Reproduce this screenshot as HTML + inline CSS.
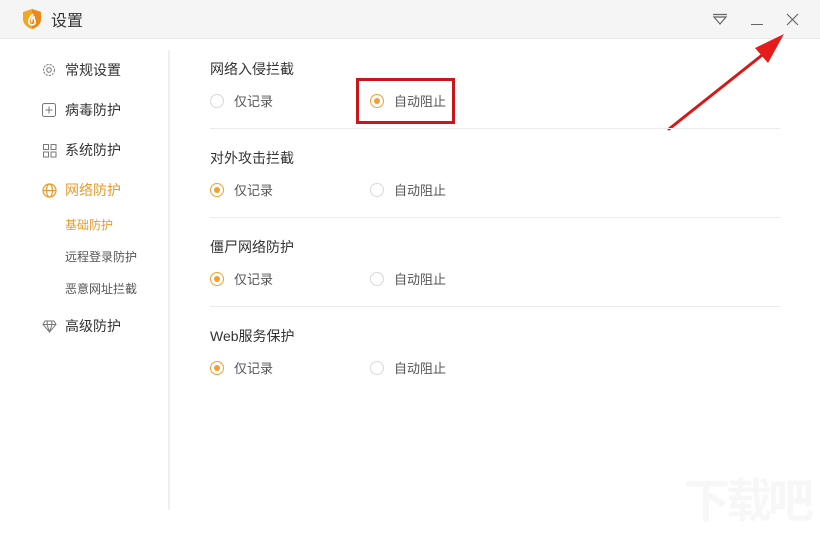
<!DOCTYPE html>
<html><head><meta charset="utf-8"><style>
*{margin:0;padding:0;box-sizing:border-box}
body{width:820px;height:540px;background:#fff;font-family:"Liberation Sans","Noto Sans CJK SC",sans-serif;position:relative;overflow:hidden;color:#333}
.title{position:absolute;left:0;top:0;width:820px;height:39px;background:#f5f5f5;border-bottom:1px solid #e8e8e8}
.t{position:absolute;left:51px;top:7px;font-size:16px;color:#333}
.nav{position:absolute;font-size:14px;color:#333}
.sub{position:absolute;left:65px;font-size:12px;color:#555}
.div{position:absolute;left:168px;top:50px;width:2px;height:460px;background:#efefef}
.h{position:absolute;left:210px;font-size:14px;color:#333}
.r{position:absolute;width:14px;height:14px;border:1px solid #d8d8d8;border-radius:50%}
.r.on{border-color:#f0a030}
.r.on::after{content:"";position:absolute;left:3px;top:3px;width:6px;height:6px;border-radius:50%;background:#f0a030}
.l{position:absolute;font-size:13px;color:#555}
.line{position:absolute;left:210px;width:570px;height:1px;background:#ebebeb}
</style></head><body>
<div class="title">
<svg style="position:absolute;left:22px;top:8px" width="20" height="22" viewBox="0 0 20 22"><path d="M10 1 L19 4 L19 11 C19 16 15 19.5 10 21 C5 19.5 1 16 1 11 L1 4 Z" fill="#f2a623"/><path d="M10 1 L19 4 L19 11 C19 16 15 19.5 10 21Z" fill="#e8891a"/><path d="M11 6 C8 9 6 12 7 15 C8 17.5 12 17.5 13 15 C14 12 11 11 12 8 C10 10 9 12 10 14" fill="none" stroke="#fff" stroke-width="1.6"/></svg>
<div class="t">设置</div>
<svg style="position:absolute;left:712px;top:13px" width="16" height="12"><path d="M1 1.5H15M2 4L8 11L14 4Z" fill="none" stroke="#666" stroke-width="1.2"/></svg>
<div style="position:absolute;left:751px;top:24px;width:12px;height:1px;background:#666"></div>
<svg style="position:absolute;left:786px;top:13px" width="13" height="13"><path d="M1 1L12 12M12 1L1 12" stroke="#666" stroke-width="1.2"/></svg>
</div>
<svg style="position:absolute;left:666px;top:30px" width="120" height="102"><path d="M3 99 L100 22" stroke="#d81818" stroke-width="3" stroke-linecap="round"/><path d="M118 4 L89 18 L102 33 Z" fill="#e41c1c"/></svg>

<svg style="position:absolute;left:42px;top:63px" width="14" height="14" viewBox="0 0 14 14"><circle cx="7" cy="7" r="2.3" fill="none" stroke="#777"/><circle cx="7" cy="7" r="5.5" fill="none" stroke="#777" stroke-dasharray="2.2 1.1"/></svg>
<div class="nav" style="left:65px;top:60px">常规设置</div>
<svg style="position:absolute;left:42px;top:103px" width="14" height="14"><rect x="0.5" y="0.5" width="13" height="13" rx="2" fill="none" stroke="#777"/><path d="M7 3.5V10.5M3.5 7H10.5" stroke="#777"/></svg>
<div class="nav" style="left:65px;top:100px">病毒防护</div>
<svg style="position:absolute;left:43px;top:144px" width="14" height="14"><rect x="0.5" y="0.5" width="5" height="5" fill="none" stroke="#777"/><rect x="0.5" y="8" width="5" height="5" fill="none" stroke="#777"/><rect x="8" y="0.5" width="5" height="5" fill="none" stroke="#777"/><rect x="8" y="8" width="5" height="5" fill="none" stroke="#777"/></svg>
<div class="nav" style="left:65px;top:140px">系统防护</div>
<svg style="position:absolute;left:42px;top:183px" width="15" height="15"><circle cx="7.5" cy="7.5" r="6.5" fill="none" stroke="#e89a2c" stroke-width="1.2"/><ellipse cx="7.5" cy="7.5" rx="3" ry="6.5" fill="none" stroke="#e89a2c" stroke-width="1.2"/><path d="M1 7.5H14" stroke="#e89a2c" stroke-width="1.2"/></svg>
<div class="nav" style="left:65px;top:180px;color:#e89a2c">网络防护</div>
<div class="sub" style="top:216px;color:#e89a2c">基础防护</div>
<div class="sub" style="top:248px">远程登录防护</div>
<div class="sub" style="top:280px">恶意网址拦截</div>
<svg style="position:absolute;left:42px;top:320px" width="15" height="13"><path d="M3 1H12L14 4.5L7.5 12L1 4.5Z M1 4.5H14 M5 4.5L7.5 12L10 4.5 M5.5 1L5 4.5 M9.5 1L10 4.5" fill="none" stroke="#777"/></svg>
<div class="nav" style="left:65px;top:316px">高级防护</div>
<div class="div"></div>

<div class="h" style="top:59px">网络入侵拦截</div>
<div class="r" style="left:210px;top:94px"></div><div class="l" style="left:234px;top:91px">仅记录</div>
<div class="r on" style="left:370px;top:94px"></div><div class="l" style="left:394px;top:91px">自动阻止</div>
<div style="position:absolute;left:356px;top:78px;width:99px;height:46px;border:3px solid #c8161d"></div>
<div class="line" style="top:128px"></div>

<div class="h" style="top:148px">对外攻击拦截</div>
<div class="r on" style="left:210px;top:183px"></div><div class="l" style="left:234px;top:180px">仅记录</div>
<div class="r" style="left:370px;top:183px"></div><div class="l" style="left:394px;top:180px">自动阻止</div>
<div class="line" style="top:217px"></div>

<div class="h" style="top:237px">僵尸网络防护</div>
<div class="r on" style="left:210px;top:272px"></div><div class="l" style="left:234px;top:269px">仅记录</div>
<div class="r" style="left:370px;top:272px"></div><div class="l" style="left:394px;top:269px">自动阻止</div>
<div class="line" style="top:306px"></div>

<div class="h" style="top:326px">Web服务保护</div>
<div class="r on" style="left:210px;top:361px"></div><div class="l" style="left:234px;top:358px">仅记录</div>
<div class="r" style="left:370px;top:361px"></div><div class="l" style="left:394px;top:358px">自动阻止</div>

<div style="position:absolute;left:684px;top:478px;font-size:46px;color:#f7f7f7;font-weight:bold;letter-spacing:-4px;line-height:46px">下载吧</div>
</body></html>
